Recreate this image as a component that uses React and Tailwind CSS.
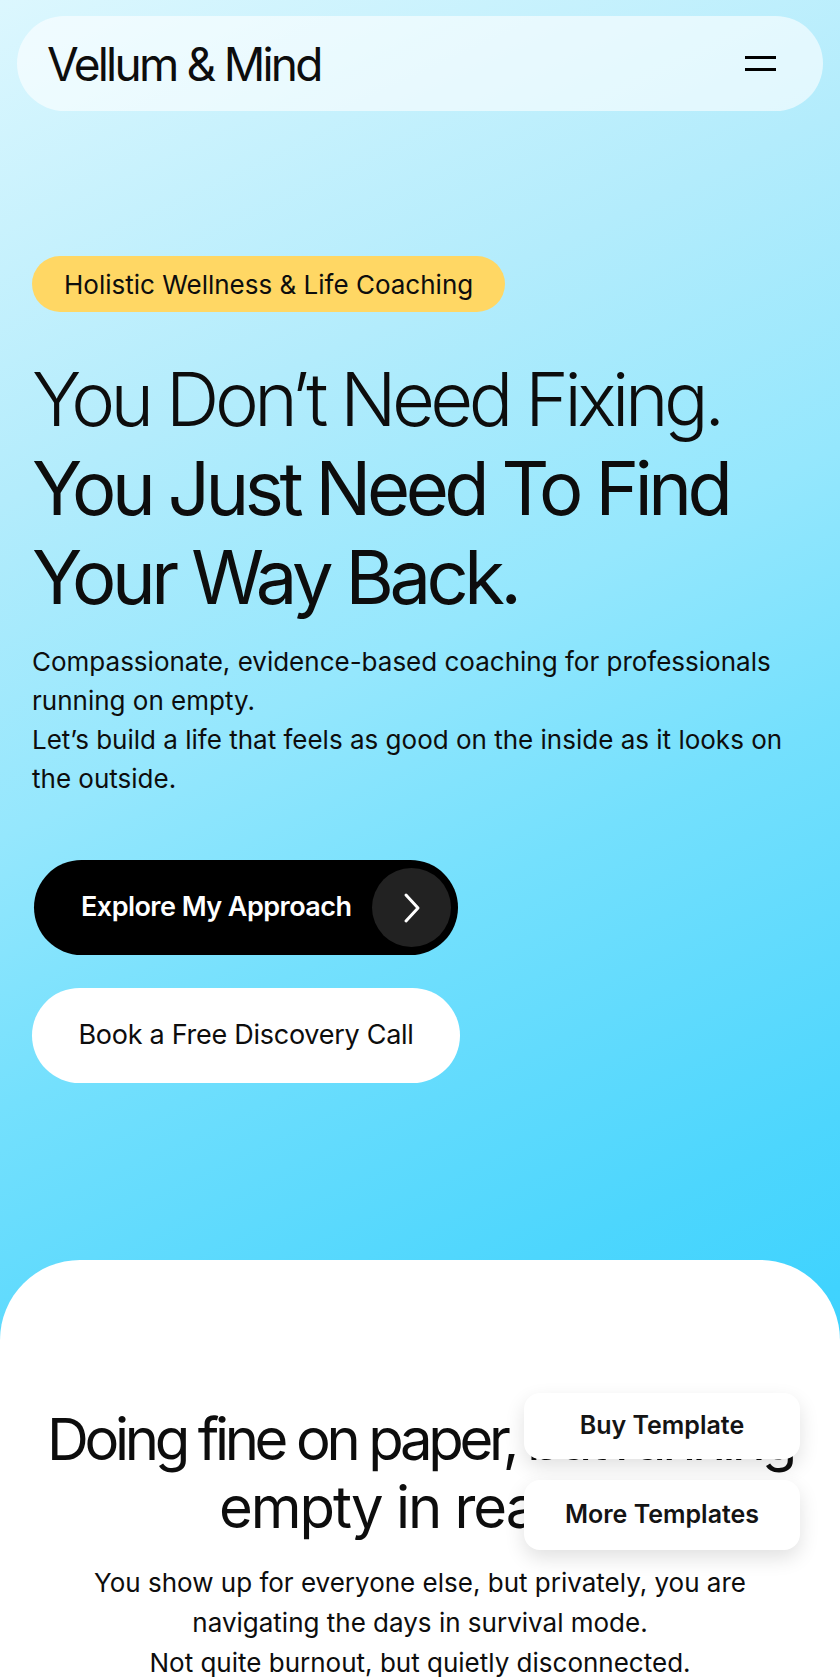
const font = { fontFamily: 'Inter, "Noto Sans", sans-serif' };

function Chevron() {
  return (
    <svg width="18" height="32" viewBox="0 0 18 32" fill="none">
      <polyline points="3,3 15,16 3,29" stroke="white" strokeWidth="3" strokeLinecap="round" strokeLinejoin="round" />
    </svg>
  );
}

export default function App() {
  return (
    <div
      className="relative min-h-screen w-full overflow-hidden bg-[linear-gradient(155deg,#dcf7fe_0%,#b3ecfc_24%,#95e7fd_40%,#74e0fd_53%,#62dbfd_62%,#4dd6fd_72%,#40d3fe_80%,#38d1fe_100%)] text-[#0d0d0d]"
      style={font}
    >
      {/* Nav */}
      <div className="px-[17px] pt-[16px]">
        <nav className="h-[95px] rounded-full bg-white/60 flex items-center justify-between pl-[30px] pr-[47px]">
          <span className="text-[46px] leading-none tracking-[-0.06em] font-normal">Vellum &amp; Mind</span>
          <button className="flex flex-col gap-[9px]">
            <span className="block w-[31px] h-[3px] bg-black"></span>
            <span className="block w-[31px] h-[3px] bg-black"></span>
          </button>
        </nav>
      </div>

      {/* Hero */}
      <section className="px-[32px]">
        <div className="mt-[145px] inline-flex items-center h-[56px] px-[32px] rounded-full bg-[#ffd764] text-[26px] tracking-normal">
          Holistic Wellness &amp; Life Coaching
        </div>
        <h1 className="mt-[43px] text-[74px] leading-[89px] tracking-[-0.06em]">
          <span className="font-light">You Don’t Need Fixing.</span>
          <br />
          <span className="font-normal">You Just Need To Find Your Way Back.</span>
        </h1>
        <p className="mt-[20px] text-[26px] leading-[39px] tracking-normal">
          Compassionate, evidence-based coaching for professionals running on empty.
          <br />
          Let’s build a life that feels as good on the inside as it looks on the outside.
        </p>

        <div className="mt-[62px] ml-[2px] flex flex-col items-start gap-[33px]">
          <button className="h-[95px] w-[424px] rounded-full bg-black flex items-center justify-between pl-[47px] pr-[7px]">
            <span className="text-white text-[27px] font-semibold tracking-[-0.02em]">Explore My Approach</span>
            <span className="w-[79px] h-[79px] rounded-full bg-[#222222] flex items-center justify-center">
              <Chevron />
            </span>
          </button>
          <button className="-ml-[2px] h-[95px] w-[428px] rounded-full bg-white flex items-center justify-center text-[27px] tracking-[-0.01em]">
            Book a Free Discovery Call
          </button>
        </div>
      </section>

      {/* Problem section */}
      <section className="mt-[177px] bg-white rounded-t-[80px] px-[20px] pt-[145px] pb-[20px] text-center">
        <h2 className="text-[58px] leading-[68px] font-normal">
          <span className="block whitespace-nowrap tracking-[-0.075em]">Doing fine on paper, but running</span>
          <span className="block whitespace-nowrap tracking-[-0.035em]">empty in reality.</span>
        </h2>
        <p className="mt-[22px] mx-auto max-w-[700px] text-[26px] leading-[40px] tracking-normal">
          You show up for everyone else, but privately, you are navigating the days in survival mode.
          <br />
          Not quite burnout, but quietly disconnected.
        </p>
      </section>

      {/* Floating template buttons */}
      <div className="absolute right-[40px] top-[1393px] flex flex-col gap-[21px]">
        <a className="w-[276px] h-[66px] rounded-[16px] bg-white shadow-[0_8px_20px_rgba(0,0,0,0.12)] flex items-center justify-center text-[25px] font-semibold text-[#141414]">
          Buy Template
        </a>
        <a className="w-[276px] h-[70px] rounded-[16px] bg-white shadow-[0_8px_20px_rgba(0,0,0,0.12)] flex items-center justify-center text-[25px] font-semibold text-[#141414]">
          More Templates
        </a>
      </div>
    </div>
  );
}
